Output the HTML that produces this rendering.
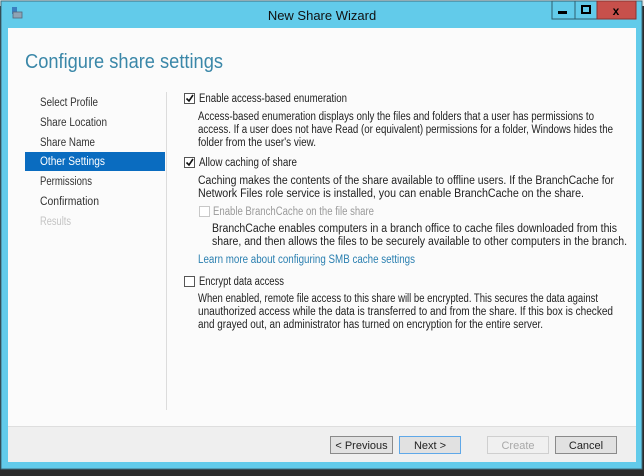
<!DOCTYPE html>
<html><head><meta charset="utf-8"><style>
html,body{margin:0;padding:0;width:644px;height:476px;overflow:hidden;background:#3a3a3a}
svg{display:block}
text{font-family:"Liberation Sans",sans-serif}
</style></head><body>
<svg width="644" height="476" viewBox="0 0 644 476" xmlns="http://www.w3.org/2000/svg">
<rect x="0" y="0" width="644" height="476" fill="#2b2b2b"/>
<rect x="0" y="0" width="644" height="6" fill="#e8e8e8"/>
<rect x="1" y="1" width="641" height="468" fill="#62cbea" stroke="#3d6f80" stroke-width="1"/>
<rect x="12" y="7" width="5" height="7" fill="#3a7fc0"/>
<rect x="13" y="12" width="9" height="6" fill="#8fa3b5" stroke="#55677a" stroke-width="0.8"/>
<text x="322" y="20" font-size="13" fill="#111" text-anchor="middle">New Share Wizard</text>
<rect x="552" y="1" width="23" height="18" fill="#62cbea" stroke="#2f5f70" stroke-width="1"/>
<rect x="558" y="11" width="9" height="3" fill="#000"/>
<rect x="575" y="1" width="22" height="18" fill="#62cbea" stroke="#2f5f70" stroke-width="1"/>
<rect x="582" y="6" width="8" height="7" fill="none" stroke="#000" stroke-width="2"/>
<rect x="597" y="1" width="39" height="18" fill="#c7504b" stroke="#8a3330" stroke-width="1"/>
<text x="616" y="15" font-size="12" font-weight="bold" fill="#000" text-anchor="middle">x</text>
<rect x="8" y="28" width="628" height="398" fill="#fbfbfb"/>
<rect x="8" y="426" width="628" height="36" fill="#efefef"/>
<rect x="8" y="426" width="628" height="1" fill="#dedede"/>
<text x="25" y="68" font-size="20" fill="#3a87a8" textLength="198" lengthAdjust="spacingAndGlyphs">Configure share settings</text>
<rect x="25" y="152" width="140" height="19" fill="#0a6cc0"/>
<g font-size="11.5" fill="#333">
<text x="40" y="106" textLength="58" lengthAdjust="spacingAndGlyphs">Select Profile</text>
<text x="40" y="126" textLength="67" lengthAdjust="spacingAndGlyphs">Share Location</text>
<text x="40" y="146" textLength="55" lengthAdjust="spacingAndGlyphs">Share Name</text>
<text x="40" y="165" fill="#fff" textLength="65" lengthAdjust="spacingAndGlyphs">Other Settings</text>
<text x="40" y="185" textLength="52" lengthAdjust="spacingAndGlyphs">Permissions</text>
<text x="40" y="205" textLength="59" lengthAdjust="spacingAndGlyphs">Confirmation</text>
<text x="40" y="225" fill="#c4c4c4" textLength="31" lengthAdjust="spacingAndGlyphs">Results</text>
</g>
<rect x="166" y="92" width="1" height="318" fill="#dcdcdc"/>
<rect x="184.5" y="93.5" width="10" height="10" fill="#fff" stroke="#555"/>
<path d="M186.5 98.5 L189 101 L193 95" fill="none" stroke="#111" stroke-width="1.6"/>
<rect x="184.5" y="157.5" width="10" height="10" fill="#fff" stroke="#555"/>
<path d="M186.5 162.5 L189 165 L193 159" fill="none" stroke="#111" stroke-width="1.6"/>
<rect x="199.5" y="206.5" width="10" height="10" fill="#fff" stroke="#c8c8c8"/>
<rect x="184.5" y="276.5" width="10" height="10" fill="#fff" stroke="#555"/>
<g font-size="11.5" fill="#222">
<text x="199" y="102" textLength="148" lengthAdjust="spacingAndGlyphs">Enable access-based enumeration</text>
<text x="198" y="120" textLength="396" lengthAdjust="spacingAndGlyphs">Access-based enumeration displays only the files and folders that a user has permissions to</text>
<text x="198" y="133" textLength="415" lengthAdjust="spacingAndGlyphs">access. If a user does not have Read (or equivalent) permissions for a folder, Windows hides the</text>
<text x="198" y="146" textLength="118" lengthAdjust="spacingAndGlyphs">folder from the user's view.</text>
<text x="199" y="166" textLength="98" lengthAdjust="spacingAndGlyphs">Allow caching of share</text>
<text x="198" y="184" textLength="416" lengthAdjust="spacingAndGlyphs">Caching makes the contents of the share available to offline users. If the BranchCache for</text>
<text x="198" y="197" textLength="386" lengthAdjust="spacingAndGlyphs">Network Files role service is installed, you can enable BranchCache on the share.</text>
<text x="213" y="215" fill="#9a9a9a" textLength="161" lengthAdjust="spacingAndGlyphs">Enable BranchCache on the file share</text>
<text x="212" y="232" textLength="405" lengthAdjust="spacingAndGlyphs">BranchCache enables computers in a branch office to cache files downloaded from this</text>
<text x="212" y="245" textLength="415" lengthAdjust="spacingAndGlyphs">share, and then allows the files to be securely available to other computers in the branch.</text>
<text x="198" y="263" fill="#2a7fb0" textLength="217" lengthAdjust="spacingAndGlyphs">Learn more about configuring SMB cache settings</text>
<text x="199" y="285" textLength="85" lengthAdjust="spacingAndGlyphs">Encrypt data access</text>
<text x="198" y="302" textLength="400" lengthAdjust="spacingAndGlyphs">When enabled, remote file access to this share will be encrypted. This secures the data against</text>
<text x="198" y="315" textLength="415" lengthAdjust="spacingAndGlyphs">unauthorized access while the data is transferred to and from the share. If this box is checked</text>
<text x="198" y="328" textLength="345" lengthAdjust="spacingAndGlyphs">and grayed out, an administrator has turned on encryption for the entire server.</text>
</g>
<g font-size="11" text-anchor="middle">
<rect x="330.5" y="436.5" width="62" height="17" fill="#e1e1e1" stroke="#8a8a8a"/>
<text x="361.5" y="449" fill="#222">&lt; Previous</text>
<rect x="399.5" y="436.5" width="61" height="17" fill="#e1e1e1" stroke="#5fa8e8"/>
<text x="430" y="449" fill="#222">Next &gt;</text>
<rect x="487.5" y="436.5" width="61" height="17" fill="#f0f0f0" stroke="#cfcfcf"/>
<text x="518" y="449" fill="#a8a8a8">Create</text>
<rect x="555.5" y="436.5" width="61" height="17" fill="#e1e1e1" stroke="#8a8a8a"/>
<text x="586" y="449" fill="#222">Cancel</text>
</g>
</svg>
</body></html>
